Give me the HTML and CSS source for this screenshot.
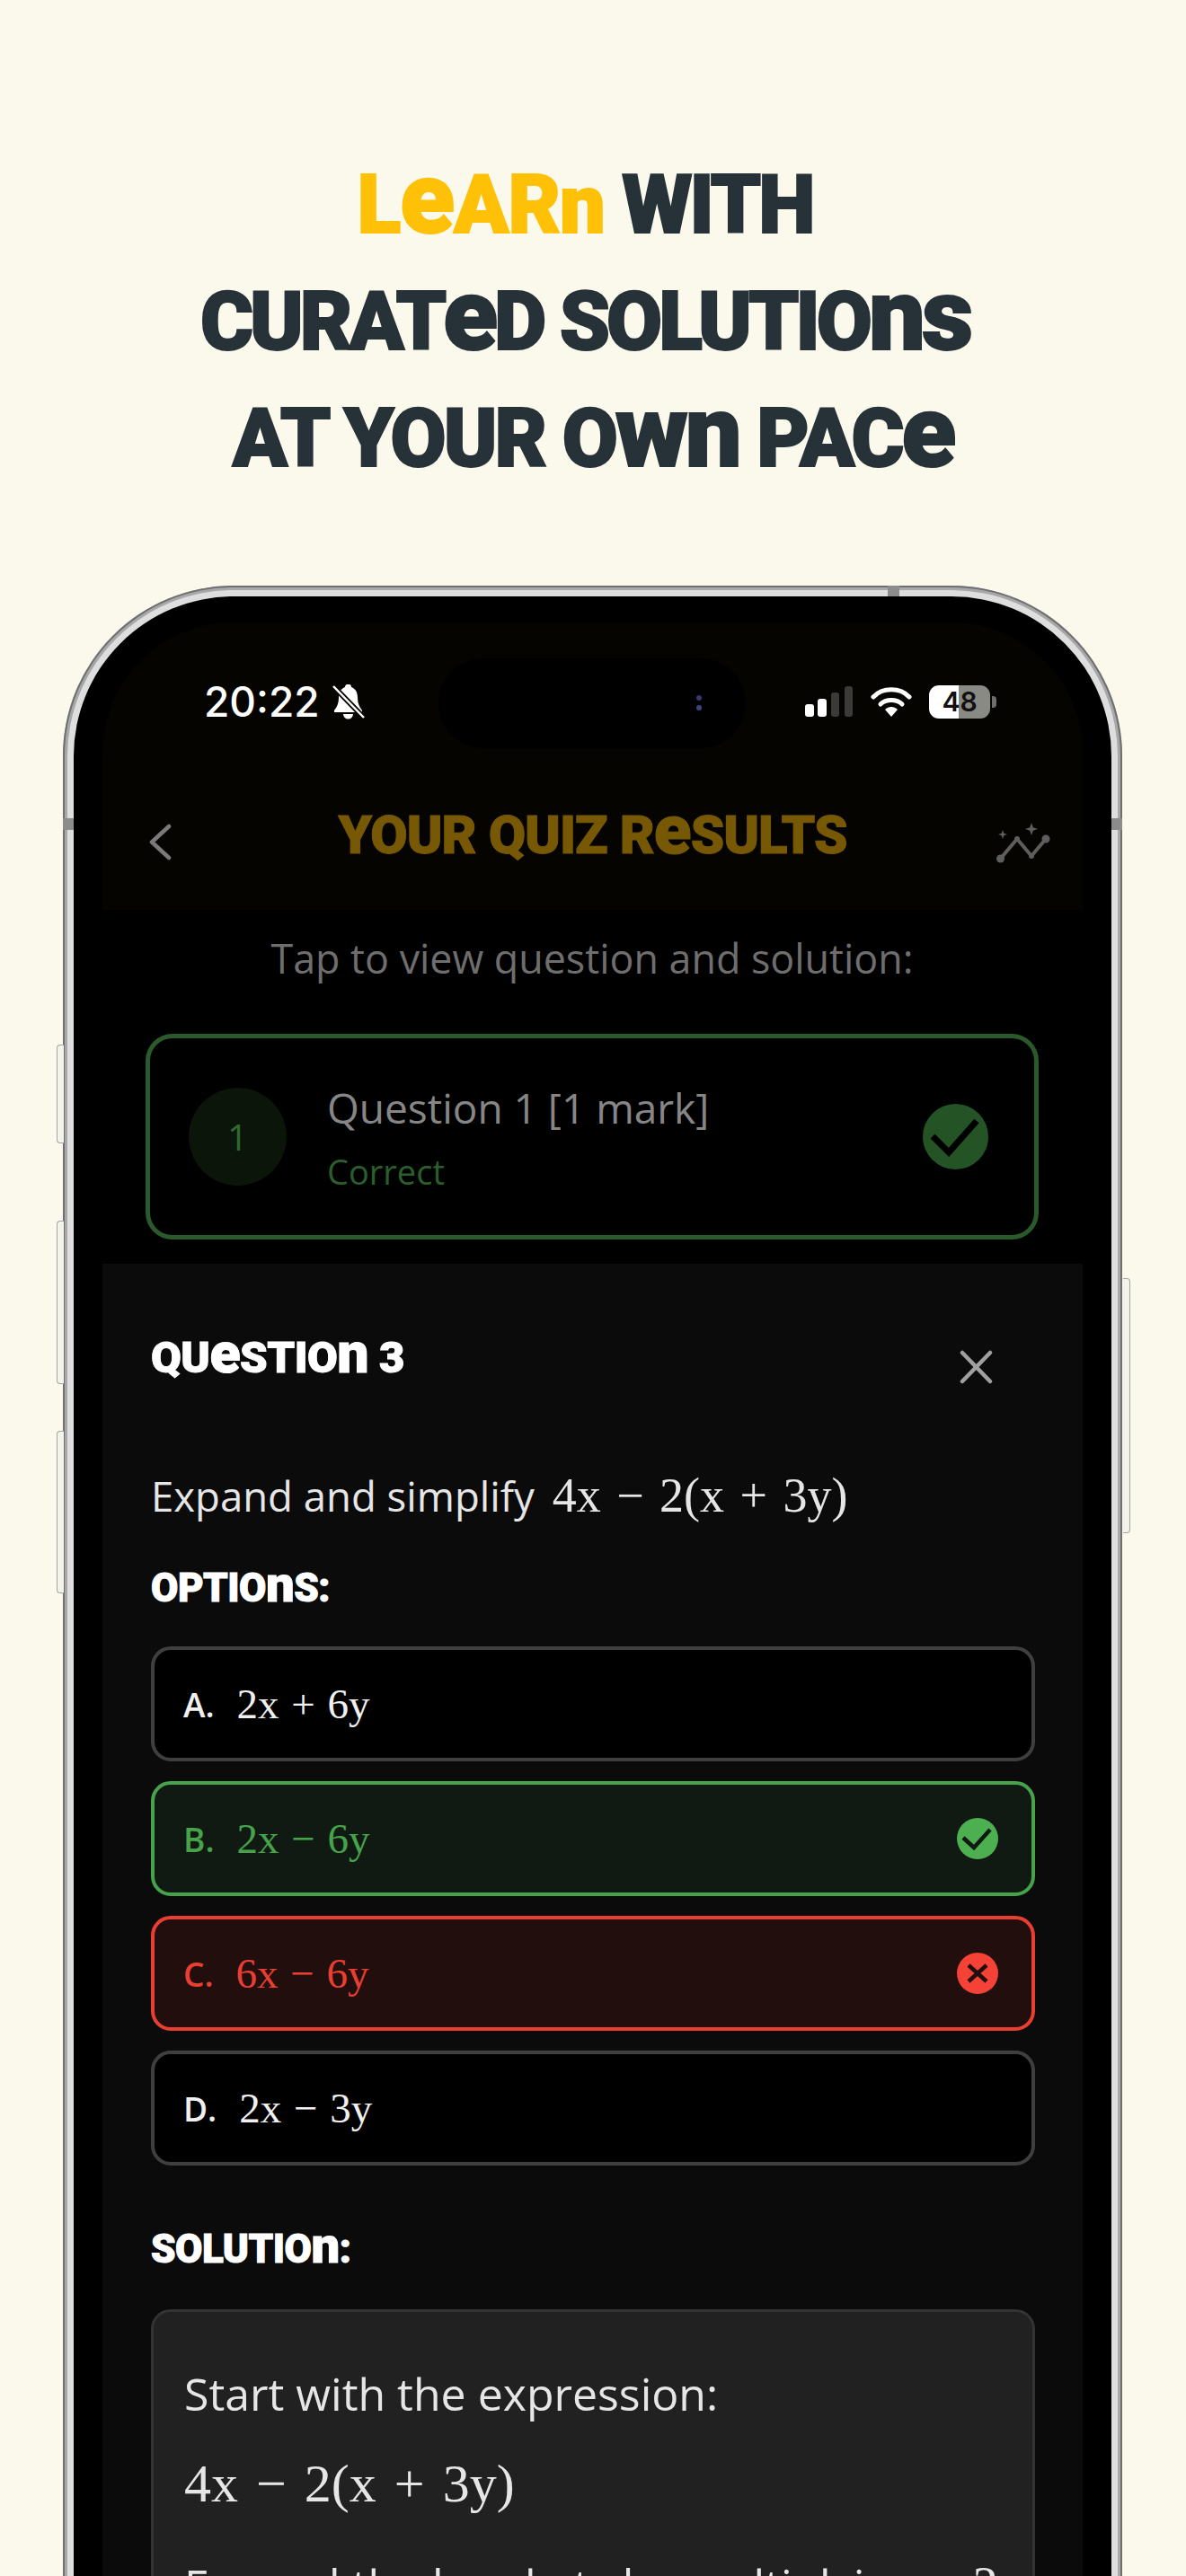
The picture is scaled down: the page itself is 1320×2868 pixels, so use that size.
FILE: index.html
```html
<!DOCTYPE html>
<html>
<head>
    <title>Learn with curated solutions</title>
    <link rel="stylesheet" href="styles.css">
</head>
<body>
<div class="poster">
    <h1 class="headline display">
        <span class="line line-left"><span class="accent">L<i>e</i>ARn</span> WITH</span>
        <span class="line line-left line-tight">CURAT<i>e</i>D SOLUTIO<i>ns</i></span>
        <span class="line">AT YOUR O<i>wn</i> PAC<i>e</i></span>
    </h1>

    <div class="phone">
        <span class="side-btn btn-action"></span>
        <span class="side-btn btn-up"></span>
        <span class="side-btn btn-down"></span>
        <span class="side-btn btn-power"></span>
        <span class="band band-top"></span>
        <span class="band band-left"></span>
        <span class="band band-right"></span>
        <div class="bezel">
            <div class="screen">
                <div class="island"><span class="lens"></span></div>

                <div class="top-bar">
                    <div class="status-bar">
                        <div class="status-left">
                            <span class="clock">20:22</span>
                            <svg class="bell" viewBox="0 0 37 40" width="37" height="40">
                                <path d="M18 1c-2 0-3 1-3 3C10 6 8 10 8 16c0 6-2 10-5 14v2h31v-2c-3-4-5-8-5-14 0-6-2-10-7-12 0-2-1-3-3-3zM13 34a5.500 5.500 0 0 0 11 0z" fill="#fff"/>
                                <path d="M2 3l34 35" stroke="#060400" stroke-width="6"/>
                                <path d="M2 3l34 35" stroke="#fff" stroke-width="2.500"/>
                            </svg>
                        </div>
                        <div class="status-right">
                            <svg class="signal" viewBox="0 0 53 34" width="53" height="34">
                                <rect x="0" y="20" width="10" height="14" rx="3" fill="#fff"/>
                                <rect x="14" y="14" width="10" height="20" rx="3" fill="#fff"/>
                                <rect x="29" y="7" width="9" height="27" rx="3" fill="#3b3a36"/>
                                <rect x="44" y="0" width="9" height="34" rx="3" fill="#3b3a36"/>
                            </svg>
                            <svg class="wifi" viewBox="0 0 46 34" width="46" height="34">
                                <path d="M3 12C13 1 33 1 43 12" stroke="#fff" stroke-width="5" fill="none" stroke-linecap="round"/>
                                <path d="M11 20C17 14 29 14 35 20" stroke="#fff" stroke-width="5" fill="none" stroke-linecap="round"/>
                                <path d="M23 34l-7-8c4-4 10-4 14 0z" fill="#fff"/>
                            </svg>
                            <div class="battery"><span class="battery-num">48</span></div>
                            <span class="battery-cap"></span>
                        </div>
                    </div>
                    <div class="nav-bar">
                        <svg class="back" viewBox="0 0 25 41" width="25" height="41">
                            <path d="M22 3L3 20.500 22 38" stroke="#7a7a7a" stroke-width="4.500" fill="none" stroke-linecap="round" stroke-linejoin="round"/>
                        </svg>
                        <div class="nav-title display">YOUR QUIZ R<i>e</i>SULTS</div>
                        <svg class="sparkle" viewBox="0 0 61 46" width="61" height="46">
                            <path d="M4.500 41L23 19l16 19 16-19" stroke="#5e5e5e" stroke-width="4" fill="none"/>
                            <circle cx="4.500" cy="41" r="4.500" fill="#5e5e5e"/>
                            <circle cx="23" cy="19" r="3" fill="#5e5e5e"/>
                            <circle cx="39" cy="38" r="3" fill="#5e5e5e"/>
                            <circle cx="55" cy="19" r="4.500" fill="#5e5e5e"/>
                            <path d="M39 1l1.800 5.200L46 8l-5.200 1.800L39 15l-1.800-5.200L32 8l5.200-1.800z" fill="#5e5e5e"/>
                            <path d="M7 9l1.300 3.700L12 14l-3.700 1.300L7 19l-1.300-3.700L2 14l3.700-1.300z" fill="#5e5e5e"/>
                        </svg>
                    </div>
                </div>

                <div class="results">
                    <p class="tap-hint">Tap to view question and solution:</p>
                    <div class="result-card">
                        <span class="result-num">1</span>
                        <div class="result-text">
                            <div class="result-title">Question 1 [1 mark]</div>
                            <div class="result-status">Correct</div>
                        </div>
                        <svg class="result-icon" viewBox="0 0 73 73" width="73" height="73">
                            <circle cx="36.500" cy="36.500" r="36.500" fill="#245325"/>
                            <path d="M11 36l18 18 31-35" stroke="#000" stroke-width="7" fill="none"/>
                        </svg>
                    </div>
                </div>

                <div class="sheet">
                    <div class="sheet-head">
                        <h2 class="sheet-title display">QU<i>e</i>STIO<i>n</i> 3</h2>
                        <svg class="close" viewBox="0 0 37 38" width="37" height="38">
                            <path d="M3 3l31 32M34 3L3 35" stroke="#a0a0a0" stroke-width="4.500" stroke-linecap="round"/>
                        </svg>
                    </div>
                    <p class="question">Expand and simplify <span class="math math-large">4x &minus; 2(x + 3y)</span></p>

                    <h3 class="section-title display">OPTIO<i>n</i>S:</h3>
                    <div class="options">
                        <div class="option">
                            <span class="opt-letter">A.</span><span class="math">2x + 6y</span>
                        </div>
                        <div class="option option-right">
                            <span class="opt-letter">B.</span><span class="math">2x &minus; 6y</span>
                            <svg class="opt-icon" viewBox="0 0 46 46" width="46" height="46">
                                <circle cx="23" cy="23" r="23" fill="#4caf50"/>
                                <path d="M7 22l12 11 18-20" stroke="#10190f" stroke-width="4.500" fill="none"/>
                            </svg>
                        </div>
                        <div class="option option-wrong">
                            <span class="opt-letter">C.</span><span class="math">6x &minus; 6y</span>
                            <svg class="opt-icon" viewBox="0 0 46 46" width="46" height="46">
                                <circle cx="23" cy="23" r="23" fill="#f44336"/>
                                <path d="M13 14l20 18M33 14L13 32" stroke="#220f0c" stroke-width="4.500"/>
                            </svg>
                        </div>
                        <div class="option">
                            <span class="opt-letter">D.</span><span class="math">2x &minus; 3y</span>
                        </div>
                    </div>

                    <h3 class="section-title solution-title display">SOLUTIO<i>n</i>:</h3>
                    <div class="solution">
                        <p class="solution-text">Start with the expression:</p>
                        <p class="solution-math"><span class="math">4x &minus; 2(x + 3y)</span></p>
                        <p class="solution-text">Expand the brackets by multiplying <span class="math math-inline">&minus;2</span></p>
                    </div>
                </div>
            </div>
        </div>
    </div>
</div>
</body>
</html>
```
FILE: styles.css
```css
* {
	box-sizing: border-box;
}

html, body {
	margin: 0;
	padding: 0;
}

body {
	background-color: #fbf9ec;
	font-family: "Open Sans", "Noto Sans", sans-serif;
}

.poster {
	width: 1320px;
	height: 2868px;
	overflow: hidden;
	padding-top: 164px;
}

/* chunky display type, lowercase forms blown up to cap height */
.display {
	font-family: Roboto, "Open Sans", sans-serif;
	font-weight: 900;
	-webkit-text-stroke: 1px currentColor;
}

.display i {
	font-style: normal;
	font-size: 1.28em;
	line-height: 0;
}

/* headline */
.headline {
	margin: 0;
	text-align: center;
	font-size: 90px;
	line-height: 130px;
	letter-spacing: -3px;
	-webkit-text-stroke: 2px currentColor;
	color: #263238;
}

.headline i {
	font-size: 1.24em;
}

.line {
	display: block;
	height: 130px;
}

.line-left {
	padding-right: 18px;
}

.line-tight {
	letter-spacing: -4px;
}

.accent {
	color: #ffc107;
	letter-spacing: -1px;
}

/* phone frame */
.phone {
	position: relative;
	width: 1179px;
	height: 2300px;
	margin: 98px 0 0 70px;
	padding: 12px 12px 0;
	border-radius: 190px 190px 0 0;
	background: #dedede;
	box-shadow: inset 0 0 0 2px #6f6f6f, inset 0 0 0 5px #a8a8a8;
}

.side-btn {
	position: absolute;
	left: -7px;
	width: 8px;
	background: #f4f3ea;
	border: 1px solid #a5a5a5;
	border-right: none;
	border-radius: 4px 0 0 4px;
}

.btn-action { top: 511px; height: 110px; }
.btn-up { top: 707px; height: 182px; }
.btn-down { top: 941px; height: 181px; }

.btn-power {
	left: auto;
	right: -9px;
	top: 771px;
	height: 284px;
	border: 1px solid #a5a5a5;
	border-left: none;
	border-radius: 0 4px 4px 0;
}

.band {
	position: absolute;
	background: #8c8c8c;
}

.band-top { left: 918px; top: 0; width: 13px; height: 12px; }
.band-left { left: 0; top: 259px; width: 12px; height: 13px; }
.band-right { right: 0; top: 259px; width: 12px; height: 13px; }

.bezel {
	height: 100%;
	padding: 29px 32px 0;
	background: #000;
	border-radius: 178px 178px 0 0;
}

.screen {
	position: relative;
	height: 100%;
	background: #000;
	border-radius: 145px 145px 0 0;
	overflow: hidden;
	display: flex;
	flex-direction: column;
}

.island {
	position: absolute;
	left: 374px;
	top: 40px;
	width: 342px;
	height: 100px;
	border-radius: 50px;
	background: #000;
}

.lens {
	position: absolute;
	left: 287px;
	top: 41px;
	width: 6px;
	height: 6px;
	border-radius: 50%;
	background: #34386a;
	box-shadow: 0 11px 0 #3f437c;
}

/* dimmed app behind the sheet */
.top-bar {
	flex: none;
	height: 320px;
	background: #060400;
}

.status-bar {
	height: 176px;
	padding: 68px 96px 0 113px;
	display: flex;
	justify-content: space-between;
	align-items: flex-start;
}

.status-left {
	display: flex;
	align-items: center;
	height: 40px;
	gap: 13px;
}

.clock {
	font-family: Inter, Roboto, sans-serif;
	font-weight: 500;
	font-size: 46px;
	line-height: 48px;
	color: #fff;
}

.status-right {
	display: flex;
	align-items: center;
	height: 40px;
}

.signal {
	margin-right: 20px;
}

.wifi {
	margin-right: 19px;
}

.battery {
	width: 68px;
	height: 37px;
	border-radius: 11px;
	background: linear-gradient(90deg, #fff 49%, #8a8a85 49%);
	display: flex;
	align-items: center;
	justify-content: center;
}

.battery-num {
	font-family: Inter, Roboto, sans-serif;
	font-weight: 600;
	font-size: 30px;
	color: #111;
}

.battery-cap {
	width: 5px;
	height: 13px;
	margin-left: 2px;
	border-radius: 0 4px 4px 0;
	background: #6f6f6a;
}

.nav-bar {
	height: 144px;
	display: grid;
	grid-template-columns: 96px 1fr 96px;
	align-items: center;
	padding-bottom: 24px;
}

.back {
	justify-self: start;
	margin: 17px 0 0 52px;
}

.nav-title {
	text-align: center;
	font-size: 60px;
	letter-spacing: -1px;
	color: #775805;
	white-space: nowrap;
}

.sparkle {
	justify-self: end;
	margin: 17px 35px 0 0;
}

.results {
	flex: none;
	height: 394px;
	padding: 0 49px 0 48px;
}

.tap-hint {
	margin: 0;
	padding-top: 26px;
	text-align: center;
	font-size: 44.800px;
	line-height: 56px;
	color: #6e6e6e;
}

.result-card {
	display: flex;
	align-items: center;
	height: 229px;
	margin-top: 56px;
	padding: 0 51px 0 43px;
	border: 5px solid #2a5a2c;
	border-radius: 30px;
}

.result-num {
	flex: none;
	width: 109px;
	height: 109px;
	border-radius: 50%;
	background: #0b1509;
	color: #2f6b31;
	font-size: 40px;
	line-height: 109px;
	text-align: center;
}

.result-text {
	flex: 1;
	margin-left: 45px;
}

.result-title {
	font-size: 46px;
	font-weight: 500;
	line-height: 60px;
	color: #868686;
	margin-bottom: 16px;
}

.result-status {
	font-size: 38px;
	line-height: 50px;
	color: #2a5f2d;
}

.result-icon {
	flex: none;
}

/* bottom sheet */
.sheet {
	flex: none;
	height: 1600px;
	background: #0b0b0b;
	padding: 0 53px 0 54px;
}

.sheet-head {
	display: flex;
	justify-content: space-between;
	align-items: center;
	height: 208px;
	padding-right: 47px;
}

.sheet-title {
	margin: 0;
	font-size: 49px;
	letter-spacing: -0.500px;
	color: #fff;
}

.close {
	margin-top: 22px;
}

.question {
	margin: 15px 0 0;
	font-size: 45.500px;
	line-height: 70px;
	color: #e6e6e6;
}

.math {
	font-family: "Liberation Serif", "DejaVu Serif", serif;
	font-weight: 400;
	line-height: 1;
}

.math-large {
	font-size: 54px;
	word-spacing: 4px;
	margin-left: 8px;
}

.section-title {
	margin: 40px 0 0;
	font-size: 44px;
	line-height: 56px;
	letter-spacing: -0.500px;
	color: #fff;
}

.options {
	margin-top: 37px;
	display: flex;
	flex-direction: column;
	gap: 22px;
}

.option {
	display: flex;
	align-items: center;
	height: 128px;
	padding: 0 37px 0 32px;
	background: #000;
	border: 4px solid #3f3f3f;
	border-radius: 22px;
	color: #f0f0f0;
	font-size: 37px;
}

.option .math {
	font-size: 47px;
	word-spacing: 2px;
	margin-left: 25px;
}

.opt-letter {
	font-weight: 600;
}

.opt-icon {
	margin-left: auto;
}

.option-right {
	background: #111a12;
	border-color: #46a34a;
	color: #46a34a;
}

.option-wrong {
	background: #220f0d;
	border-color: #e83f32;
	color: #e83f32;
}

.solution-title {
	margin-top: 65px;
}

.solution {
	margin-top: 39px;
	height: 500px;
	padding: 59px 34px 0;
	background: #212121;
	border: 3px solid #333;
	border-radius: 22px;
	color: #e6e6e6;
}

.solution-text {
	margin: 0;
	font-size: 50px;
	line-height: 64px;
	white-space: nowrap;
}

.solution-math {
	margin: 27px 0 46px;
	font-size: 60px;
	line-height: 76px;
	word-spacing: 5px;
}

.math-inline {
	font-size: 56px;
	margin-left: 18px;
}
```
